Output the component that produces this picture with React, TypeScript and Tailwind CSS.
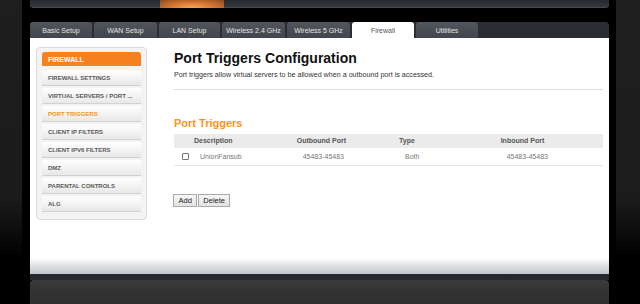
import React from "react";

const tabs: { label: string; w: string; active?: boolean }[] = [
  { label: "Basic Setup", w: "w-[62px]" },
  { label: "WAN Setup", w: "w-[63px]" },
  { label: "LAN Setup", w: "w-[61px]" },
  { label: "Wireless 2.4 GHz", w: "w-[63px]" },
  { label: "Wireless 5 GHz", w: "w-[63px]" },
  { label: "Firewall", w: "w-[62px]", active: true },
  { label: "Utilities", w: "w-[62px]" },
];

const items = [
  "FIREWALL SETTINGS",
  "VIRTUAL SERVERS / PORT ...",
  "PORT TRIGGERS",
  "CLIENT IP FILTERS",
  "CLIENT IPV6 FILTERS",
  "DMZ",
  "PARENTAL CONTROLS",
  "ALG",
];

export default function App() {
  return (
    <div
      className="w-[640px] h-[304px] overflow-hidden flex bg-black"
      style={{ fontFamily: '"Liberation Sans", Arial, sans-serif' }}
    >
      {/* left side */}
      <div className="w-[22px] h-full bg-[linear-gradient(to_bottom,#1e1e1e_0%,#1b1b1b_65%,#000_85%)]" />
      <div className="w-[8px] h-full bg-black" />

      {/* main column */}
      <div className="w-[579px] h-full flex flex-col">
        {/* top bar */}
        <div className="h-[8px] rounded-b-[4px] bg-[linear-gradient(to_bottom,#26292e,#363a40)] flex shadow-[inset_0_-1px_0_#44484f]">
          <div className="w-[130px]" />
          <div className="w-[64px] h-full bg-[radial-gradient(ellipse_at_bottom,#f6a862_0%,#dc7a32_45%,#8a4a22_100%)]" />
        </div>
        <div className="h-[14px]" />

        {/* tab bar */}
        <div className="h-[16px] flex gap-[2px] bg-[#2a2d32] rounded-t-[4px]">
          {tabs.map((t) => (
            <div
              key={t.label}
              className={`${t.w} h-full rounded-t-[3px] flex items-center justify-center text-[7px] leading-none whitespace-nowrap ${
                t.active
                  ? "bg-white text-[#555]"
                  : "bg-[linear-gradient(to_bottom,#51555c,#42464c)] text-[#e2e2e2]"
              }`}
            >
              {t.label}
            </div>
          ))}
        </div>

        {/* white content area */}
        <div className="h-[236px] flex flex-col bg-white">
          <div className="flex-1 flex">
            {/* sidebar */}
            <div className="ml-[6px] mt-[9px] w-[111px] h-[173px] border border-[#dcdcdc] bg-[#f3f3f3] rounded-[4px] px-[5px] pt-[4px] flex flex-col">
              <div className="h-[14px] rounded-t-[3px] bg-[#f5821f] text-white font-bold text-[7px] leading-none flex items-center pl-[6px]">
                FIREWALL
              </div>
              <div className="mt-[4px] flex flex-col gap-[3px]">
                {items.map((it) => (
                  <div
                    key={it}
                    className={`h-[15px] flex items-center pl-[6px] text-[6px] leading-none font-bold whitespace-nowrap bg-[linear-gradient(to_bottom,#ffffff,#e8e8e8)] shadow-[0_1px_0_#d2d2d2] ${
                      it === "PORT TRIGGERS" ? "text-[#f7941d]" : "text-[#5a5a5a]"
                    }`}
                  >
                    {it}
                  </div>
                ))}
              </div>
            </div>

            {/* content */}
            <div className="ml-[27px] w-[429px] flex flex-col pt-[11.5px]">
              <div className="h-[16px] text-[14px] leading-[16px] font-bold text-[#111] whitespace-nowrap">
                Port Triggers Configuration
              </div>
              <div className="mt-[5.5px] h-[9px] text-[7.15px] leading-[9px] text-[#333] whitespace-nowrap">
                Port triggers allow virtual servers to be allowed when a outbound port is accessed.
              </div>
              <div className="mt-[9px] h-px bg-[#dedede]" />
              <div className="mt-[27.4px] h-[13px] text-[11px] leading-[13px] font-bold text-[#f7941d] whitespace-nowrap">
                Port Triggers
              </div>
              <div className="mt-[3.6px] h-[14px] bg-[#ebebeb] grid grid-cols-[20px_102.7px_102.3px_101.7px_1fr] items-center text-[7px] leading-none font-bold text-[#555]">
                <div />
                <div>Description</div>
                <div>Outbound Port</div>
                <div>Type</div>
                <div>Inbound Port</div>
              </div>
              <div className="h-[18px] border-b border-[#e6e6e6] grid grid-cols-[20px_102.7px_102.3px_101.7px_1fr] items-center text-[7px] leading-none text-[#777]">
                <div className="pl-[8px] flex">
                  <div className="w-[7px] h-[7px] border border-[#767676] rounded-[1px] bg-white" />
                </div>
                <div className="pl-[6px]">UnionFansub</div>
                <div className="pl-[6px]">45483-45483</div>
                <div className="pl-[6px]">Both</div>
                <div className="pl-[6px]">45483-45483</div>
              </div>
              <div className="mt-[28px] flex gap-[1px] -ml-[1px]">
                <div className="h-[13px] px-[4.5px] flex items-center border border-[#a9a9a9] bg-[linear-gradient(to_bottom,#f6f6f6,#e3e3e3)] text-[7.5px] leading-none text-[#222]">
                  Add
                </div>
                <div className="h-[13px] px-[4px] flex items-center border border-[#a9a9a9] bg-[linear-gradient(to_bottom,#f6f6f6,#e3e3e3)] text-[7.5px] leading-none text-[#222]">
                  Delete
                </div>
              </div>
            </div>
          </div>
          <div className="h-[16px] bg-[linear-gradient(to_bottom,#ffffff,#d9dadc_60%,#c4c5c9)]" />
        </div>

        {/* bottom */}
        <div className="h-[6px] bg-[#25282c]" />
        <div className="flex-1 rounded-t-[4px] bg-[linear-gradient(to_bottom,#3b3b3b,#333333_40%,#2f2f2f)]" />
      </div>

      {/* right side */}
      <div className="w-[7px] h-full bg-black" />
      <div className="w-[24px] h-full bg-[linear-gradient(to_bottom,#1f1f1f_0%,#1c1c1c_65%,#000_85%)]" />
    </div>
  );
}
